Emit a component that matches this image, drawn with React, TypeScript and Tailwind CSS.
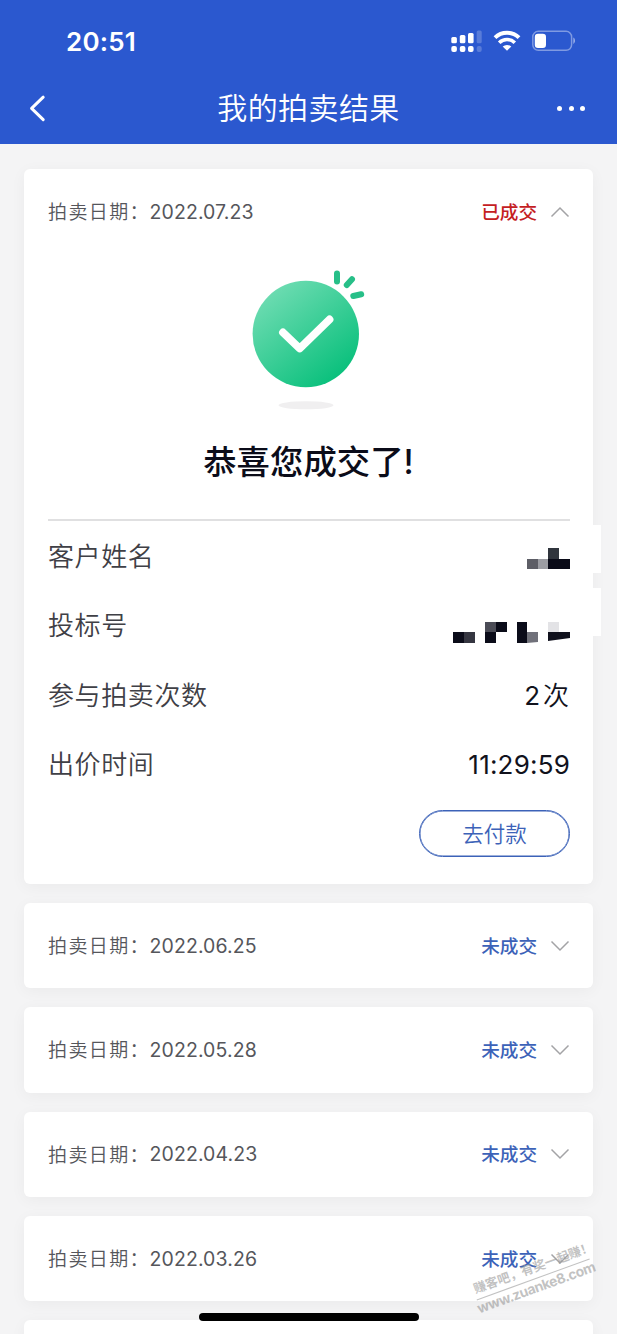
const closedAuctions = ['2022.06.25', '2022.05.28', '2022.04.23', '2022.03.26', '2022.02.26'];

function StatusBar() {
  return (
    <div className="flex h-[72px] items-start justify-between pt-[23px] pr-[41px] pl-[66px] text-white">
      <span className="pt-px text-[26px] leading-[36px] font-[580] tracking-[0.2px]">20:51</span>
      <div className="flex pt-[6px]">
        <svg width="31" height="24" viewBox="0 0 31 24" fill="currentColor">
          <rect x="0.3" y="8" width="5.6" height="6.2" rx="1.5" />
          <rect x="8.8" y="6" width="5.6" height="8.2" rx="1.5" />
          <rect x="17" y="4" width="5.6" height="10.2" rx="1.5" />
          <rect x="25.7" y="1.5" width="5" height="12.7" rx="1.5" opacity="0.22" />
          <rect x="0.3" y="17" width="5.6" height="6" rx="2" />
          <rect x="8.8" y="17" width="5.6" height="6" rx="2" />
          <rect x="17" y="17" width="5.6" height="6" rx="2" />
          <rect x="25.7" y="17" width="5" height="6" rx="2" opacity="0.22" />
        </svg>
        <svg className="ml-[11px]" width="28" height="24" viewBox="0 0 28 24" fill="none" stroke="currentColor">
          <path d="M2 8.6a17.3 17.3 0 0 1 24 0" strokeWidth="4" />
          <path d="M6.2 13.7a11 11 0 0 1 15.6 0" strokeWidth="3.6" />
          <path d="M14 21.8l-4.3-4.2a6.3 6.3 0 0 1 8.6 0z" fill="currentColor" stroke="none" />
        </svg>
        <svg className="ml-[11px]" width="44" height="24" viewBox="0 0 44 24" fill="none">
          <rect x="0.8" y="2.3" width="38.8" height="19" rx="5.5" stroke="white" strokeOpacity="0.4" strokeWidth="1.5" />
          <rect x="2.8" y="4.8" width="11.2" height="14.2" rx="3.2" fill="white" />
          <path d="M41.3 8.6c2.3 1.2 2.3 5.2 0 6.4z" fill="white" fillOpacity="0.5" />
        </svg>
      </div>
    </div>
  );
}

function NavBar() {
  return (
    <div className="flex h-[72px] items-center justify-between pr-[32px] pl-[28px] text-white">
      <svg width="30" height="28" viewBox="0 0 30 28" fill="none" stroke="currentColor" strokeWidth="3" strokeLinecap="round" strokeLinejoin="round">
        <path d="M15.2 3.2L3.6 14.4L15.2 25.6" />
      </svg>
      <h1 className="pl-[2px] text-[30px] leading-none font-[350] tracking-[0.4px]">我的拍卖结果</h1>
      <div className="flex w-[28px] justify-between">
        <span className="h-[5px] w-[5px] rounded-full bg-white" />
        <span className="h-[5px] w-[5px] rounded-full bg-white" />
        <span className="h-[5px] w-[5px] rounded-full bg-white" />
      </div>
    </div>
  );
}

function Chevron({ up }: { up?: boolean }) {
  return (
    <svg className="ml-[13px] text-[#a3a3a6]" width="20" height="12" viewBox="0 0 20 12" fill="none" stroke="currentColor" strokeWidth="1.5">
      <path d={up ? 'M1.5 10.5L10 2L18.5 10.5' : 'M1.5 1.5L10 10L18.5 1.5'} />
    </svg>
  );
}

function AuctionHeader({ date, won }: { date: string; won?: boolean }) {
  return (
    <div className="flex h-[85.3px] items-center justify-between pr-[23px] pl-[24px]">
      <div className="flex items-center pt-[2px] leading-none whitespace-nowrap text-[#55565b]">
        <span className="w-[101.5px] text-[19px] font-[350] tracking-[1.4px]">拍卖日期：</span>
        <span className="text-[19.5px] tracking-[0.1px]">{date}</span>
      </div>
      <div className="flex items-center">
        <span className={`pt-px text-[18.6px] leading-none font-medium ${won ? 'text-[#c4201f]' : 'text-[#3c62b8]'}`}>
          {won ? '已成交' : '未成交'}
        </span>
        <Chevron up={won} />
      </div>
    </div>
  );
}

function SuccessMark() {
  return (
    <svg className="ml-[224px]" width="124" height="146" viewBox="0 0 124 146" fill="none">
      <defs>
        <linearGradient id="mark" x1="18" y1="28" x2="90" y2="118" gradientUnits="userSpaceOnUse">
          <stop stopColor="#6edcb2" />
          <stop offset="1" stopColor="#06bf7a" />
        </linearGradient>
      </defs>
      <ellipse cx="58" cy="140.3" rx="27.5" ry="4" fill="#f0eff0" />
      <circle cx="57.8" cy="69" r="53.2" fill="url(#mark)" />
      <path d="M35 67.5L51.7 83.5L81.5 54.5" stroke="white" strokeWidth="7.8" strokeLinecap="round" strokeLinejoin="round" />
      <g stroke="#27bf88" strokeWidth="6" strokeLinecap="round">
        <path d="M89 8.5v8" />
        <path d="M98.8 20L104 14.2" />
        <path d="M105.3 31L113.2 29.3" />
      </g>
    </svg>
  );
}

function MaskedName() {
  return (
    <svg width="43" height="22" viewBox="0 0 43 22" shapeRendering="crispEdges">
      <path d="M0 11h11v10H0z" fill="#5d5e66" />
      <path d="M11 11h10v10H11z" fill="#9c9da3" />
      <path d="M21 0h11v11H21z" fill="#30353d" />
      <path d="M21 11h22v10H21z" fill="#090a17" />
    </svg>
  );
}

function MaskedNumber() {
  return (
    <svg width="117" height="22" viewBox="0 0 117 22">
      <path d="M0 10h11v11H0zM43 0h11v10H43zM32 10h11v11H32zM64 0h10v21H64z" fill="#0b0c19" />
      <path d="M11 10h11v11H11z" fill="#353641" />
      <path d="M32 0h11v10H32z" fill="#4b4c56" />
      <path d="M74 10h11v10l-11 1z" fill="#70717a" />
      <path d="M95 0h11v10H95z" fill="#e3e3e6" />
      <path d="M95 10h22v6l-22 3z" fill="#10111d" />
    </svg>
  );
}

function InfoRow({ label, children }: { label: string; children: React.ReactNode }) {
  return (
    <div className="flex h-[69.5px] items-center justify-between">
      <span className="text-[26px] leading-none font-[350] tracking-[0.6px] text-[#3f4046]">{label}</span>
      <span className="flex items-center text-[26px] leading-none text-[#11121c]">{children}</span>
    </div>
  );
}

function WonCard() {
  return (
    <section className="relative h-[715px] rounded-[6px] bg-white shadow-[0_3px_16px_rgba(0,0,0,0.045)]">
      <AuctionHeader date="2022.07.23" won />
      <div className="h-[264.7px] pt-[11px]">
        <SuccessMark />
        <h2 className="mt-[33px] text-center text-[33.4px] leading-[36px] font-medium text-[#0b0c19]">恭喜您成交了!</h2>
      </div>
      <div className="mr-[23px] ml-[24px] border-t-2 border-[#e0e0e1] pt-px">
        <InfoRow label="客户姓名">
          <span className="pt-[4px]"><MaskedName /></span>
        </InfoRow>
        <InfoRow label="投标号">
          <span className="pt-[13px]"><MaskedNumber /></span>
        </InfoRow>
        <InfoRow label="参与拍卖次数">
          2<span className="mr-px ml-[3px] font-[350]">次</span>
        </InfoRow>
        <InfoRow label="出价时间">
          <span className="tracking-[0.2px]">11:29:59</span>
        </InfoRow>
      </div>
      <div className="flex justify-end pt-[10px] pr-[23px]">
        <button className="h-[47px] w-[151px] rounded-full border-[1.5px] border-[#3c62b8] pt-[2px] text-[21.5px] leading-none font-[350] text-[#3c62b8] shadow-[inset_0_0_0_0.5px_#3c62b8]">
          去付款
        </button>
      </div>
      <span className="absolute top-[356px] -right-[8px] h-[48px] w-[8px] bg-white" />
      <span className="absolute top-[419px] -right-[8px] h-[48px] w-[8px] bg-white" />
    </section>
  );
}

function Watermark() {
  return (
    <div className="absolute top-[1263px] left-[465px] w-[136px] -rotate-[20deg] text-center leading-none font-bold whitespace-nowrap text-[#999999]/60">
      <div className="h-[16px] pl-[8px] text-[12.6px]">赚客吧，有奖一起赚！</div>
      <div className="mx-auto w-[120px] border-t border-[#999999]/60" />
      <div className="pt-[1px] text-[14px] tracking-[-0.5px]">www.zuanke8.com</div>
    </div>
  );
}

export default function App() {
  return (
    <div className="relative h-[1334px] w-[617px] overflow-hidden bg-[#f4f4f5] font-['Inter','Noto_Sans_CJK_SC',sans-serif]">
      <header className="h-[144px] bg-[#2b58cf]">
        <StatusBar />
        <NavBar />
      </header>
      <main className="flex flex-col gap-[19px] px-[24px] pt-[25px]">
        <WonCard />
        {closedAuctions.map((date) => (
          <section key={date} className="rounded-[6px] bg-white shadow-[0_3px_16px_rgba(0,0,0,0.045)]">
            <AuctionHeader date={date} />
          </section>
        ))}
      </main>
      <Watermark />
      <div className="absolute top-[1313px] left-[199px] h-[8px] w-[220px] rounded-full bg-black" />
    </div>
  );
}
